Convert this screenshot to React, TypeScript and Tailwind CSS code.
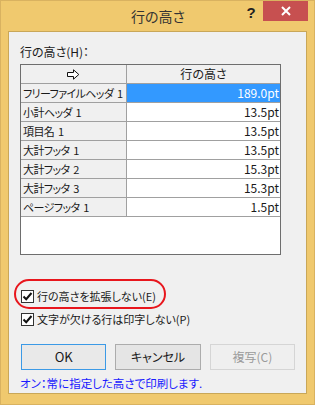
import React from "react";

const font = "[font-family:'Noto_Sans_CJK_JP','Noto_Sans',sans-serif] [font-feature-settings:'palt']";

const rows: [string, string][] = [
  ["フリーファイルヘッダ 1", "189.0pt"],
  ["小計ヘッダ 1", "13.5pt"],
  ["項目名 1", "13.5pt"],
  ["大計フッタ 1", "13.5pt"],
  ["大計フッタ 2", "15.3pt"],
  ["大計フッタ 3", "15.3pt"],
  ["ページフッタ 1", "1.5pt"],
];

function Check() {
  return (
    <span className="w-[13px] h-[13px] border border-[#333] bg-white flex items-center justify-center shrink-0">
      <svg width="11" height="11" viewBox="0 0 11 11">
        <path d="M1.5 5.5 L4.2 8.2 L9.5 2" stroke="#111" strokeWidth="2" fill="none" />
      </svg>
    </span>
  );
}

export default function App() {
  return (
    <div className={`w-[315px] h-[405px] bg-[#f0c96e] border border-[#d9b260] flex flex-col text-[#1a1a1a] ${font}`}>
      <div className="h-[30px] flex items-start shrink-0">
        <div className="flex-1 pl-[74px] pt-[5px] text-center text-[14px] leading-[20px] text-[#333]">行の高さ</div>
        <div className="w-[20px] pt-[3px] text-[15px] font-bold leading-[18px] text-[#222] [font-family:'Liberation_Sans',sans-serif] text-center">?</div>
        <div className="w-[45px] h-[20px] mr-[6px] ml-[2px] bg-[#c75050] flex items-center justify-center">
          <svg width="10" height="10" viewBox="0 0 10 10">
            <path d="M1 1 L9 9 M9 1 L1 9" stroke="#fff" strokeWidth="2" />
          </svg>
        </div>
      </div>
      <div className="mx-[7px] h-[363px] border border-[#c9a758] bg-[#f0f0f0] px-[11px] pt-[12px] flex flex-col text-[12px] leading-[16px]">
        <div className="h-[16px]">行の高さ(H)：</div>
        <div className="mt-[4px] w-[261px] h-[191px] border border-[#6e6e6e] bg-white flex flex-col">
          <div className="flex h-[19px] border-b border-[#a0a0a0] bg-[#f0f0f0]">
            <div className="w-[106px] border-r border-[#a0a0a0] flex items-center justify-center">
              <svg width="13" height="11" viewBox="0 0 13 11">
                <path d="M0.5 3.5 H6.5 V0.8 L11.8 5.5 L6.5 10.2 V7.5 H0.5 Z" fill="white" stroke="#111" strokeWidth="1" />
              </svg>
            </div>
            <div className="flex-1 flex items-center justify-center">行の高さ</div>
          </div>
          {rows.map(([l, v], i) => (
            <div key={i} className="flex h-[19px] border-b border-[#a0a0a0]">
              <div className="w-[106px] border-r border-[#a0a0a0] bg-[#f0f0f0] flex items-center pl-[2px] whitespace-pre text-[11px] tracking-[-0.6px]">{l.replace(" ", "  ")}</div>
              <div className={`flex-1 flex items-center justify-end pr-[1px] ${i === 0 ? "bg-[#3399ff] text-white" : ""}`}>{v}</div>
            </div>
          ))}
        </div>
        <div className="mt-[33px] relative flex items-center gap-[3px] h-[16px] pl-[1px] text-[11px]">
          <div className="absolute left-[-6px] top-[-9px] w-[152px] h-[30px] rounded-full border-2 border-[#e8161d]" />
          <Check />
          <span>行の高さを拡張しない(E)</span>
        </div>
        <div className="mt-[7px] flex items-center gap-[3px] h-[16px] pl-[1px] text-[11px]">
          <Check />
          <span>文字が欠ける行は印字しない(P)</span>
        </div>
        <div className="mt-[17px] flex gap-[9px] pl-[1px]">
          <div className="w-[86px] h-[26px] border border-[#3c9ae6] bg-[#e9e9e9] flex items-center justify-center text-[13px]">OK</div>
          <div className="w-[86px] h-[26px] border border-[#acacac] bg-[#e5e5e5] flex items-center justify-center">キャンセル</div>
          <div className="w-[86px] h-[26px] border border-[#d5d5d5] bg-[#efefef] text-[#9a9a9a] flex items-center justify-center">複写(C)</div>
        </div>
        <div className="mt-[5px] text-[#1a1aff] text-[11.5px]">オン：常に指定した高さで印刷します.</div>
      </div>
    </div>
  );
}
